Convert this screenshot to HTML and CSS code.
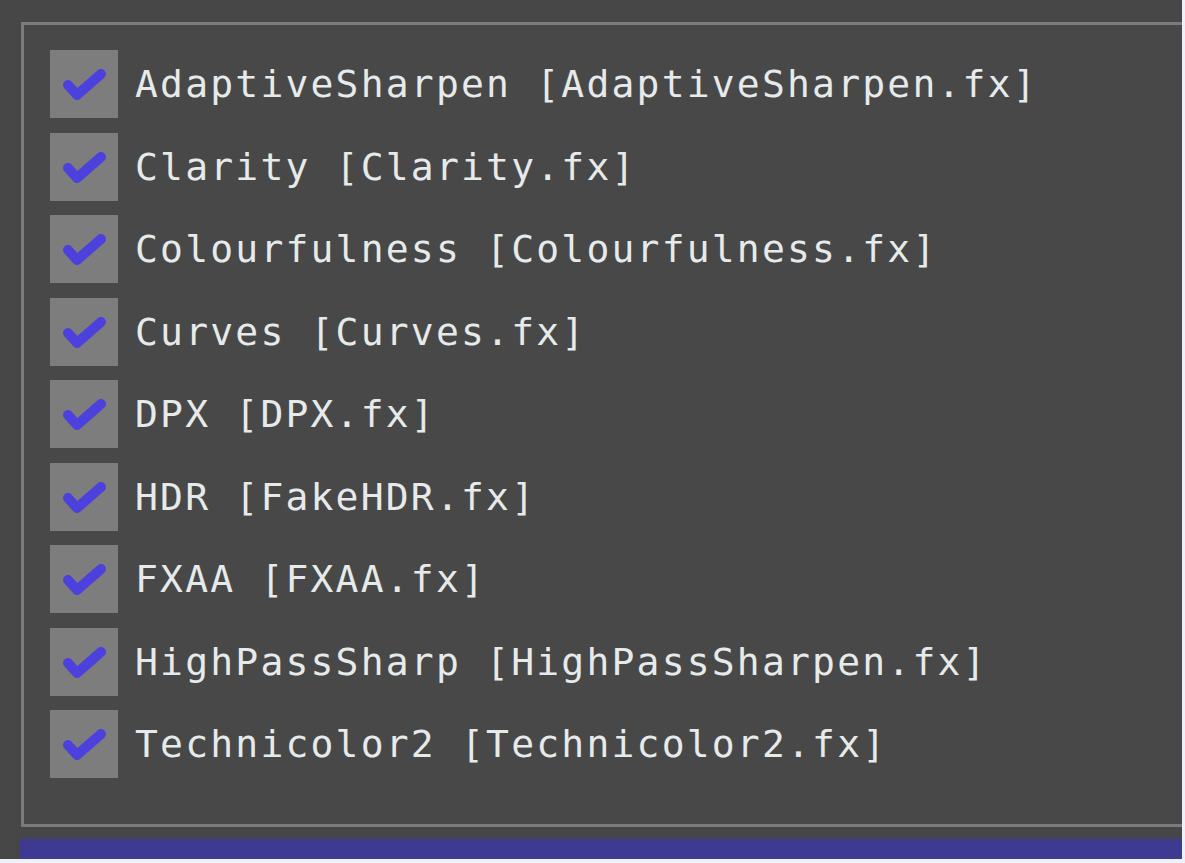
FILE: index.html
```html
<!DOCTYPE html>
<html>
<head>
<meta charset="utf-8">
<link rel="stylesheet" href="styles.css">
</head>
<body>
<div class="screen">
  <div class="panel">
    <ul class="list">
      <li class="row"><span class="box"><svg viewBox="0 0 68 68"><polyline points="18,35 27,45 51,24"/></svg></span><span class="label">AdaptiveSharpen [AdaptiveSharpen.fx]</span></li>
      <li class="row"><span class="box"><svg viewBox="0 0 68 68"><polyline points="18,35 27,45 51,24"/></svg></span><span class="label">Clarity [Clarity.fx]</span></li>
      <li class="row"><span class="box"><svg viewBox="0 0 68 68"><polyline points="18,35 27,45 51,24"/></svg></span><span class="label">Colourfulness [Colourfulness.fx]</span></li>
      <li class="row"><span class="box"><svg viewBox="0 0 68 68"><polyline points="18,35 27,45 51,24"/></svg></span><span class="label">Curves [Curves.fx]</span></li>
      <li class="row"><span class="box"><svg viewBox="0 0 68 68"><polyline points="18,35 27,45 51,24"/></svg></span><span class="label">DPX [DPX.fx]</span></li>
      <li class="row"><span class="box"><svg viewBox="0 0 68 68"><polyline points="18,35 27,45 51,24"/></svg></span><span class="label">HDR [FakeHDR.fx]</span></li>
      <li class="row"><span class="box"><svg viewBox="0 0 68 68"><polyline points="18,35 27,45 51,24"/></svg></span><span class="label">FXAA [FXAA.fx]</span></li>
      <li class="row"><span class="box"><svg viewBox="0 0 68 68"><polyline points="18,35 27,45 51,24"/></svg></span><span class="label">HighPassSharp [HighPassSharpen.fx]</span></li>
      <li class="row"><span class="box"><svg viewBox="0 0 68 68"><polyline points="18,35 27,45 51,24"/></svg></span><span class="label">Technicolor2 [Technicolor2.fx]</span></li>
    </ul>
  </div>
  <div class="bar"></div>
</div>
</body>
</html>
```

FILE: styles.css
```css
html, body {
  margin: 0;
  padding: 0;
  background: #eef2f8;
}

.screen {
  width: 1182px;
  height: 859px;
  box-sizing: border-box;
  background: #474747;
  padding: 22px 0 0 21px;
  overflow: hidden;
  display: flex;
  flex-direction: column;
}

.panel {
  border: 3px solid #7b7b7b;
  margin-right: -20px;
  padding: 25px 0 46px 26px;
  background: #484848;
}

.list {
  list-style: none;
  margin: 0;
  padding: 0;
  display: flex;
  flex-direction: column;
  gap: 14.5px;
}

.row {
  display: flex;
  align-items: center;
  gap: 17px;
  height: 68px;
}

.box {
  width: 68px;
  height: 68px;
  flex: none;
  background: #7d7d7d;
  display: block;
}

.box svg {
  display: block;
  width: 68px;
  height: 68px;
}

.box polyline {
  fill: none;
  stroke: #4c41dc;
  stroke-width: 10;
  stroke-linecap: round;
  stroke-linejoin: round;
}

.label {
  font-family: "DejaVu Sans Mono", "Liberation Mono", monospace;
  font-size: 38px;
  letter-spacing: 2.2px;
  color: #e6eaea;
  white-space: pre;
  line-height: 1;
}

.bar {
  margin-top: 13px;
  margin-left: -1px;
  height: 19px;
  background: #3f3a91;
  box-shadow: 0 -3px 4px rgba(63, 58, 145, 0.45);
}
```
